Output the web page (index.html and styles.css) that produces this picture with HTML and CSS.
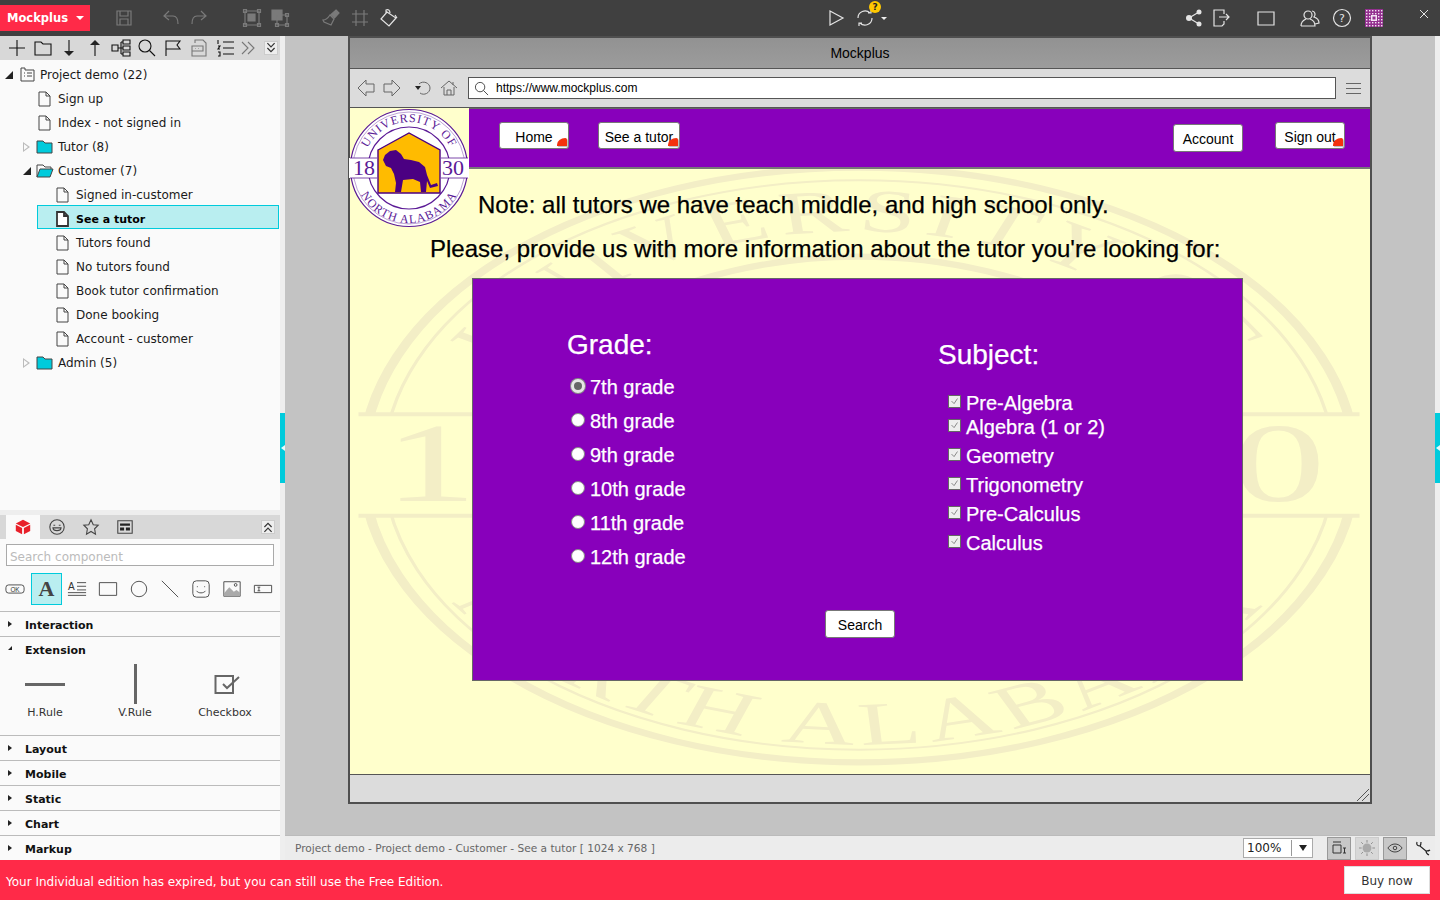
FILE: index.html
```html
<!DOCTYPE html>
<html lang="en">
<head>
  <meta charset="UTF-8">
  <title>Mockplus</title>
  <link rel="stylesheet" href="styles.css">
</head>
<body>
  <svg class="defs" width="0" height="0" aria-hidden="true">
    <defs>
      <path id="arc-top" d="M14 60 A46 46 0 0 1 106 60"/>
      <path id="arc-bottom" d="M5 60 A55 55 0 0 0 115 60"/>
      <symbol id="seal" viewBox="0 0 120 120" preserveAspectRatio="none">
        <circle class="seal-disc" cx="60" cy="60" r="58.5"/>
        <circle class="seal-line seal-thick" cx="60" cy="60" r="58.5"/>
        <circle class="seal-line seal-thin" cx="60" cy="60" r="56"/>
        <circle class="seal-line seal-thick" cx="60" cy="60" r="41"/>
        <path class="seal-disc seal-band" d="M0 50H28V70H0ZM92 50H120V70H92Z"/>
        <path class="seal-line" d="M1 50H28M1 70H28M92 50H119M92 70H119"/>
        <path class="seal-gold" d="M29 42L60 25L91 42V85H29Z"/>
        <path class="seal-ink" d="M34 52L36 47L41 43L47 42L52 46L55 51L62 52L70 54L76 59L78 67L82 77L88 75L89 78L81 80L78 73L77 84L72 84L71 74L64 71L54 72L52 84L46 84L47 75L45 66L42 60L37 58Z"/>
        <text class="seal-text seal-year" x="15" y="67">18</text>
        <text class="seal-text seal-year" x="104" y="67">30</text>
        <text class="seal-text seal-arc"><textPath href="#arc-top" startOffset="50%">UNIVERSITY OF</textPath></text>
        <text class="seal-text seal-arc"><textPath href="#arc-bottom" startOffset="50%">NORTH ALABAMA</textPath></text>
      </symbol>
    </defs>
  </svg>

  <header class="topbar">
    <div class="brand">Mockplus <span class="brand-caret"></span></div>
    <div class="tb-group tb-save dim">
      <svg class="ico" viewBox="0 0 20 20"><path d="M3 3H17V17H3ZM6 3V8H14V3M6 17V11H14V17"/></svg>
    </div>
    <div class="tb-group tb-history dim">
      <svg class="ico" viewBox="0 0 20 20"><path d="M8 3L3 8L8 12M3 8H12C15 8 17 11 17 16"/></svg>
      <svg class="ico" viewBox="0 0 20 20"><path d="M12 3L17 8L12 12M17 8H8C5 8 3 11 3 16"/></svg>
    </div>
    <div class="tb-group tb-arrange dim">
      <svg class="ico" viewBox="0 0 20 20"><path d="M3 3H17V17H3ZM1.500 1.500H4.500V4.500H1.500ZM15.500 1.500H18.500V4.500H15.500ZM1.500 15.500H4.500V18.500H1.500ZM15.500 15.500H18.500V18.500H15.500Z"/><path class="solid" d="M6 6H13V13H6Z"/></svg>
      <svg class="ico" viewBox="0 0 20 20"><path class="solid" d="M2 2H12V12H2Z"/><path d="M7 7H17V17H7ZM15.500 15.500H18.500V18.500H15.500ZM15.500 5.500H18.500V8.500H15.500ZM5.500 15.500H8.500V18.500H5.500Z"/></svg>
    </div>
    <div class="tb-group tb-tools">
      <svg class="ico dim" viewBox="0 0 20 20"><path class="solid" d="M15 2L18 5L13.500 10L10 6.500Z"/><path d="M9 7L13 11L10 17L3 14L2 12C5 12 7 10 9 7Z"/></svg>
      <svg class="ico dim" viewBox="0 0 20 20"><path d="M6 2V18M14 2V18M2 6H18M2 14H18"/></svg>
      <svg class="ico light" viewBox="0 0 20 20"><path d="M8 4L17 10L10 18L2 11ZM7 5V2C9 1 11 2 11 5M16 7L18 10"/></svg>
    </div>
    <div class="tb-group tb-run light">
      <svg class="ico" viewBox="0 0 20 20"><path d="M4 3L17 10L4 17Z"/></svg>
      <div class="sync">
        <svg class="ico" viewBox="0 0 20 20"><path d="M3 10A7 7 0 0 1 15 5M17 10A7 7 0 0 1 5 15M13 5H16V2M7 15H4V18"/></svg>
        <span class="sync-badge">?</span>
      </div>
      <span class="small-caret"></span>
    </div>
    <div class="tb-group tb-share light">
      <svg class="ico" viewBox="0 0 20 20"><path d="M15 4L5 10L15 16"/><circle class="solid-light" cx="15" cy="4" r="2.500"/><circle class="solid-light" cx="5" cy="10" r="3"/><circle class="solid-light" cx="15" cy="16" r="2.500"/></svg>
      <svg class="ico" viewBox="0 0 20 20"><path d="M13 6V2H3V18H11L13 16V13M8 9H18M15 6L18 9L15 12"/></svg>
    </div>
    <div class="tb-group tb-window light">
      <svg class="ico" viewBox="0 0 20 20"><path d="M2 4H18V17H2Z"/></svg>
    </div>
    <div class="tb-group tb-user light">
      <svg class="ico" viewBox="0 0 20 20"><circle cx="8" cy="7" r="4"/><path d="M1 18C1 13 4 12 6 11M10 11C13 12 15 14 15 18H1M12 3C15 3 16 7 14 9C17 10 19 12 19 15L15 16"/></svg>
      <svg class="ico" viewBox="0 0 20 20"><circle cx="10" cy="10" r="8.500"/><text class="help-mark" x="10" y="14">?</text></svg>
      <svg class="qr" viewBox="0 0 18 18">
        <defs>
          <pattern id="qr-cell" width="3" height="3" patternUnits="userSpaceOnUse"><rect width="3" height="3" fill="#93308f"/><rect x="1" y="1" width="1.400" height="1.400" fill="#f3e3f3"/></pattern>
        </defs>
        <rect width="18" height="18" fill="url(#qr-cell)"/>
        <rect x="6" y="6" width="6" height="6" fill="#f3e3f3"/>
        <rect x="7.500" y="7.500" width="3" height="3" fill="#93308f"/>
      </svg>
    </div>
    <svg class="tb-close light" viewBox="0 0 10 10"><path d="M1 1L9 9M9 1L1 9"/></svg>
  </header>

  <div class="workspace">
    <aside class="sidebar">
      <div class="tree-panel">
        <div class="side-tools">
          <svg class="ico" viewBox="0 0 20 20"><path d="M10 2V18M2 10H18"/></svg>
          <svg class="ico" viewBox="0 0 20 20"><path d="M2 17V4H8L10 6H18V17Z"/></svg>
          <svg class="ico" viewBox="0 0 20 20"><path d="M10 2V17"/><path class="fill-dark" d="M5 13H15L10 18Z"/></svg>
          <svg class="ico" viewBox="0 0 20 20"><path d="M10 18V4"/><path class="fill-dark" d="M5 7H15L10 2Z"/></svg>
          <svg class="ico" viewBox="0 0 20 20"><path d="M1 7H7V13H1ZM7 10H10M10 4V16M10 4H12M10 16H12M12 2H19V6H12ZM12 8H19V12H12ZM12 14H19V18H12ZM10 10H12"/></svg>
          <svg class="ico" viewBox="0 0 20 20"><circle cx="8" cy="8" r="6"/><path d="M12.500 12.500L18 18"/></svg>
          <svg class="ico" viewBox="0 0 20 20"><path d="M3 18V3H17L14 7L17 11H3"/></svg>
          <svg class="ico grey" viewBox="0 0 20 20"><path d="M6 5V2H14L17 5V18H3V8H14V13H3M6 10.500H6.500M9 10.500H9.500"/></svg>
          <svg class="ico" viewBox="0 0 20 20"><path d="M8 4H19M8 10H19M8 16H19M3 2V6M3 8H5L3 11H5M3 14H5V18H3"/></svg>
          <svg class="ico grey more" viewBox="0 0 20 20"><path d="M4 4L10 10L4 16M10 4L16 10L10 16"/></svg>
          <span class="collapse-box">
            <svg viewBox="0 0 10 10"><path d="M2 1L5 4L8 1M2 5L5 8L8 5"/></svg>
          </span>
        </div>
        <ul class="tree">
          <li class="tree-row lv0">
            <span class="twist open"></span>
            <svg class="tree-ico" viewBox="0 0 18 16"><path d="M3 1H7V3H16V14H3ZM6 6H7M9 6H14M6 9H7M9 9H14"/></svg>
            <span>Project demo (22)</span>
          </li>
          <li class="tree-row lv1"><span class="twist none"></span><svg class="tree-ico" viewBox="0 0 18 16"><path d="M3 1H10L14 5V15H3ZM10 1V5H14"/></svg><span>Sign up</span></li>
          <li class="tree-row lv1"><span class="twist none"></span><svg class="tree-ico" viewBox="0 0 18 16"><path d="M3 1H10L14 5V15H3ZM10 1V5H14"/></svg><span>Index - not signed in</span></li>
          <li class="tree-row lv1"><span class="twist closed"></span><svg class="tree-ico" viewBox="0 0 18 16"><path class="folder" d="M1 14V2H7L9 4H16V14Z"/></svg><span>Tutor (8)</span></li>
          <li class="tree-row lv1"><span class="twist open"></span><svg class="tree-ico" viewBox="0 0 18 16"><path d="M1 14V2H7L9 4H15V6"/><path class="folder" d="M4 6H17L14 14H1Z"/></svg><span>Customer (7)</span></li>
          <li class="tree-row lv2"><span class="twist none"></span><svg class="tree-ico" viewBox="0 0 18 16"><path d="M3 1H10L14 5V15H3ZM10 1V5H14"/></svg><span>Signed in-customer</span></li>
          <li class="tree-row lv2 selected"><span class="twist none"></span><svg class="tree-ico thick" viewBox="0 0 18 16"><path d="M3 1H10L14 5V15H3ZM10 1V5H14"/></svg><span>See a tutor</span></li>
          <li class="tree-row lv2"><span class="twist none"></span><svg class="tree-ico" viewBox="0 0 18 16"><path d="M3 1H10L14 5V15H3ZM10 1V5H14"/></svg><span>Tutors found</span></li>
          <li class="tree-row lv2"><span class="twist none"></span><svg class="tree-ico" viewBox="0 0 18 16"><path d="M3 1H10L14 5V15H3ZM10 1V5H14"/></svg><span>No tutors found</span></li>
          <li class="tree-row lv2"><span class="twist none"></span><svg class="tree-ico" viewBox="0 0 18 16"><path d="M3 1H10L14 5V15H3ZM10 1V5H14"/></svg><span>Book tutor confirmation</span></li>
          <li class="tree-row lv2"><span class="twist none"></span><svg class="tree-ico" viewBox="0 0 18 16"><path d="M3 1H10L14 5V15H3ZM10 1V5H14"/></svg><span>Done booking</span></li>
          <li class="tree-row lv2"><span class="twist none"></span><svg class="tree-ico" viewBox="0 0 18 16"><path d="M3 1H10L14 5V15H3ZM10 1V5H14"/></svg><span>Account - customer</span></li>
          <li class="tree-row lv1"><span class="twist closed"></span><svg class="tree-ico" viewBox="0 0 18 16"><path class="folder" d="M1 14V2H7L9 4H16V14Z"/></svg><span>Admin (5)</span></li>
        </ul>
      </div>

      <div class="comp-panel">
        <div class="comp-tabs">
          <span class="comp-tab active">
            <svg viewBox="0 0 20 20"><path class="cube-top" d="M10 2L18 6L10 10L2 6Z"/><path class="cube-side" d="M2 7.500L9 11V18L2 14.500ZM18 7.500L11 11V18L18 14.500Z"/></svg>
          </span>
          <span class="comp-tab">
            <svg viewBox="0 0 20 20"><circle cx="10" cy="10" r="8"/><path d="M6 8H8M12 8H14M5.500 11H14.500C14 15 6 15 5.500 11Z"/></svg>
          </span>
          <span class="comp-tab">
            <svg viewBox="0 0 20 20"><path d="M10 2L12.500 7.500L18 8L14 12L15 18L10 15L5 18L6 12L2 8L7.500 7.500Z"/></svg>
          </span>
          <span class="comp-tab">
            <svg viewBox="0 0 20 20"><path d="M2 3H18V17H2Z"/><path class="fill-dark" d="M4.500 6H15.500V8.500H4.500ZM4.500 10.500H9V14H4.500ZM11 10.500H15.500V14H11Z"/></svg>
          </span>
          <span class="collapse-box">
            <svg viewBox="0 0 10 10"><path d="M2 5L5 2L8 5M2 9L5 6L8 9"/></svg>
          </span>
        </div>
        <div class="comp-search">Search component</div>
        <div class="comp-icons">
          <span class="comp-cell"><svg viewBox="0 0 22 12"><rect x="1" y="1.500" width="20" height="9" rx="3"/><text class="ok-mark" x="11" y="9">OK</text></svg></span>
          <span class="comp-cell active"><span class="big-a">A</span></span>
          <span class="comp-cell"><svg viewBox="0 0 22 20"><text class="a-mark" x="1" y="11">A</text><path d="M11 3H21M11 7H21M11 11H21M1 14H21M1 17H21"/></svg></span>
          <span class="comp-cell"><svg viewBox="0 0 22 20"><path d="M1.500 3H20.500V17H1.500Z"/></svg></span>
          <span class="comp-cell"><svg viewBox="0 0 22 20"><circle cx="11" cy="10" r="8.500"/></svg></span>
          <span class="comp-cell"><svg viewBox="0 0 22 20"><path d="M2 1L20 19"/></svg></span>
          <span class="comp-cell"><svg viewBox="0 0 22 20"><rect x="2" y="1" width="18" height="18" rx="4"/><path d="M7 7V8M15 7V8M6 12C8 15 14 15 16 12"/></svg></span>
          <span class="comp-cell"><svg viewBox="0 0 22 20"><path d="M2 2H20V18H2Z"/><path class="fill-grey" d="M2 15L8 8L13 13L16 11L20 14V18H2Z"/><circle cx="15" cy="5.500" r="1.500"/></svg></span>
          <span class="comp-cell"><svg viewBox="0 0 22 20"><path d="M1.500 6H20.500V14H1.500ZM5 8H8M5 12H8M6.500 8V12"/></svg></span>
        </div>

        <div class="sec"><span class="sec-arrow"></span>Interaction</div>
        <div class="sec"><span class="sec-arrow down"></span>Extension</div>
        <div class="ext-body">
          <div class="ext-item"><span class="ext-ico"><span class="h-rule"></span></span>H.Rule</div>
          <div class="ext-item"><span class="ext-ico"><span class="v-rule"></span></span>V.Rule</div>
          <div class="ext-item"><span class="ext-ico"><svg class="ext-check" viewBox="0 0 26 20"><path d="M1.500 2H19V19H1.500Z"/><path d="M9 10L13 14L25 3"/></svg></span>Checkbox</div>
        </div>
        <div class="sec"><span class="sec-arrow"></span>Layout</div>
        <div class="sec"><span class="sec-arrow"></span>Mobile</div>
        <div class="sec"><span class="sec-arrow"></span>Static</div>
        <div class="sec"><span class="sec-arrow"></span>Chart</div>
        <div class="sec"><span class="sec-arrow"></span>Markup</div>
      </div>
    </aside>
    <span class="handle handle-left"></span>

    <main class="center">
      <div class="canvas">
        <div class="device">
          <div class="dev-title">Mockplus</div>
          <div class="dev-address">
            <svg class="dev-ico" viewBox="0 0 18 18"><path d="M9 1L1 9L9 17V13H17V5H9Z"/></svg>
            <svg class="dev-ico" viewBox="0 0 18 18"><path d="M9 1L17 9L9 17V13H1V5H9Z"/></svg>
            <svg class="dev-ico reload" viewBox="0 0 18 18"><path d="M5 5C9 1 16 4 16 9C16 14 10 17 6 14"/><path class="fill-dark" d="M1 7H7L4 11Z"/></svg>
            <svg class="dev-ico" viewBox="0 0 18 18"><path d="M1 9L9 2L17 9M4 8V16H14V8M7 16V11H11V16M13 3V6"/></svg>
            <div class="url-box">
              <svg class="url-ico" viewBox="0 0 16 16"><circle cx="6.500" cy="6.500" r="5"/><path d="M10 10L15 15"/></svg>
              https://www.mockplus.com
            </div>
            <span class="burger"></span>
          </div>

          <div class="dev-content">
            <svg class="watermark"><use href="#seal"/></svg>
            <div class="head">
              <svg class="logo"><use href="#seal"/></svg>
              <div class="head-main">
                <nav class="site-nav">
                  <a class="nav-btn linked btn-home">Home</a>
                  <a class="nav-btn linked btn-tutor">See a tutor</a>
                  <a class="nav-btn btn-account">Account</a>
                  <a class="nav-btn linked btn-out">Sign out</a>
                </nav>
                <p class="note">Note: all tutors we have teach middle, and high school only.</p>
              </div>
            </div>
            <p class="please">Please, provide us with more information about the tutor you're looking for:</p>

            <form class="search-panel">
              <div class="panel-cols">
                <div class="col-grade">
                  <h2 class="col-title">Grade:</h2>
                  <ul class="radio-list">
                    <li><span class="radio on"></span>7th grade</li>
                    <li><span class="radio"></span>8th grade</li>
                    <li><span class="radio"></span>9th grade</li>
                    <li><span class="radio"></span>10th grade</li>
                    <li><span class="radio"></span>11th grade</li>
                    <li><span class="radio"></span>12th grade</li>
                  </ul>
                </div>
                <div class="col-subject">
                  <h2 class="col-title">Subject:</h2>
                  <ul class="check-list">
                    <li class="tight"><svg class="check" viewBox="0 0 13 13"><path d="M3 6L6 9L10 3"/></svg>Pre-Algebra</li>
                    <li><svg class="check" viewBox="0 0 13 13"><path d="M3 6L6 9L10 3"/></svg>Algebra (1 or 2)</li>
                    <li><svg class="check" viewBox="0 0 13 13"><path d="M3 6L6 9L10 3"/></svg>Geometry</li>
                    <li><svg class="check" viewBox="0 0 13 13"><path d="M3 6L6 9L10 3"/></svg>Trigonometry</li>
                    <li><svg class="check" viewBox="0 0 13 13"><path d="M3 6L6 9L10 3"/></svg>Pre-Calculus</li>
                    <li><svg class="check" viewBox="0 0 13 13"><path d="M3 6L6 9L10 3"/></svg>Calculus</li>
                  </ul>
                </div>
              </div>
              <a class="nav-btn btn-search">Search</a>
            </form>
          </div>

          <div class="dev-footer">
            <svg class="grip" viewBox="0 0 12 12"><path d="M0 12L12 0M5 12L12 5"/></svg>
          </div>
        </div>
      </div>

      <div class="status">
        <span class="status-path">Project demo - Project demo - Customer - See a tutor [ 1024 x 768 ]</span>
        <div class="zoom-box"><span class="zoom-val">100%</span><span class="zoom-arrow"></span></div>
        <span class="st-btn on"><svg viewBox="0 0 16 16"><path d="M2 2H10M2 5H10V13H2ZM12 8H15M12 13H15M13.500 8V13"/></svg></span>
        <span class="st-btn faded"><svg viewBox="0 0 18 18"><circle class="fill-grey" cx="9" cy="9" r="5"/><path d="M9 0V3M9 15V18M0 9H3M15 9H18M2.500 2.500L4.500 4.500M13.500 13.500L15.500 15.500M2.500 15.500L4.500 13.500M13.500 4.500L15.500 2.500"/></svg></span>
        <span class="st-btn on"><svg viewBox="0 0 18 18"><path d="M1 9C5 3 13 3 17 9C13 15 5 15 1 9Z"/><circle cx="9" cy="9" r="2"/></svg></span>
        <span class="st-wrench"><svg viewBox="0 0 16 16"><path d="M2 2C1 5 3 6 5 6L11 11C11 13 12 14 14 15M6 2C6 3 6 5 5 6M11 11C12 11 14 11 15 10"/></svg></span>
      </div>
    </main>

    <div class="right-strip"></div>
    <span class="handle handle-right"></span>
  </div>

  <footer class="expired">
    <span>Your Individual edition has expired, but you can still use the Free Edition.</span>
    <a class="buy">Buy now</a>
  </footer>
</body>
</html>
```

FILE: styles.css
```css
* {
  box-sizing: border-box;
}

html, body {
  height: 100%;
}

body {
  margin: 0;
  width: 1440px;
  height: 900px;
  overflow: hidden;
  display: flex;
  flex-direction: column;
  background: #c3c3c3;
  font-family: "DejaVu Sans", sans-serif;
  font-size: 12px;
  color: #111;
}

ul {
  list-style: none;
  margin: 0;
  padding: 0;
}

svg {
  display: block;
  fill: none;
}

.defs {
  position: absolute;
}

/* top bar */
.topbar {
  height: 36px;
  flex: none;
  display: flex;
  align-items: center;
  background: #404040;
}

.brand {
  width: 90px;
  height: 26px;
  display: flex;
  align-items: center;
  gap: 8px;
  padding-left: 7px;
  background: #ff2a48;
  color: #fff;
  font-weight: bold;
  font-size: 11.5px;
  white-space: nowrap;
}

.brand-caret {
  width: 0;
  height: 0;
  border-left: 4px solid transparent;
  border-right: 4px solid transparent;
  border-top: 4px solid #fff;
}

.tb-group {
  display: flex;
  align-items: center;
  gap: 8px;
}

.ico {
  width: 20px;
  height: 20px;
  flex: none;
  stroke: currentColor;
  stroke-width: 1.2;
}

.dim { color: #7a7a7a; }
.light { color: #e4e4e4; }
.grey { color: #777; }

.solid { fill: currentColor; }
.solid-light { fill: currentColor; stroke: none; }

.tb-save { margin-left: 24px; }
.tb-history { margin-left: 27px; }
.tb-arrange { margin-left: 33px; }
.tb-tools { margin-left: 31px; gap: 9px; }
.tb-run { margin-left: 427px; gap: 9px; }
.tb-share { margin-left: 297px; gap: 7px; }
.tb-window { margin-left: 25px; }
.tb-user { margin-left: 24px; gap: 12px; }
.tb-user .qr { margin-left: 1px; }
.tb-close {
  width: 10px;
  height: 10px;
  margin: -8px 0 0 36px;
  stroke: currentColor;
  stroke-width: 1;
}

.sync {
  position: relative;
}

.sync-badge {
  position: absolute;
  top: -7px;
  right: -6px;
  width: 12px;
  height: 12px;
  border-radius: 50%;
  background: #ffc800;
  color: #222;
  font-size: 9px;
  line-height: 12px;
  font-weight: bold;
  text-align: center;
}

.small-caret {
  width: 0;
  height: 0;
  margin-left: -3px;
  border-left: 3px solid transparent;
  border-right: 3px solid transparent;
  border-top: 3px solid #eee;
}

.help-mark {
  fill: currentColor;
  stroke: none;
  font-size: 11px;
  text-anchor: middle;
}

.qr {
  width: 18px;
  height: 18px;
}

/* layout */
.workspace {
  flex: 1;
  display: flex;
  position: relative;
  min-height: 0;
}

.sidebar {
  width: 285px;
  flex: none;
  padding-right: 5px;
  background: #eee;
}

.tree-panel {
  height: 474px;
  background: #fafafa;
}

.side-tools {
  height: 24px;
  display: flex;
  align-items: center;
  gap: 6px;
  padding-left: 7px;
  background: #d8d8d8;
  color: #111;
}

.side-tools .ico {
  stroke-width: 1.1;
}

.side-tools .more {
  margin-left: -3px;
}

.fill-dark {
  fill: #222;
  stroke: none;
}

.fill-grey {
  fill: #aaa;
  stroke: none;
}

.collapse-box {
  width: 14px;
  height: 14px;
  flex: none;
  margin-left: auto;
  margin-right: 5px;
  background: #eee;
  border: 1px solid #ccc;
}

.collapse-box svg {
  width: 12px;
  height: 12px;
  stroke: #333;
}

/* tree */
.tree {
  padding-top: 2px;
}

.tree-row {
  height: 24px;
  display: flex;
  align-items: center;
  padding-top: 2px;
  white-space: nowrap;
  color: #1a1a1a;
}

.lv0 { padding-left: 4px; }
.lv1 { padding-left: 22px; }
.lv2 { padding-left: 40px; }

.tree-row .tree-ico + span {
  margin-left: 4px;
}

.tree-row.selected {
  margin: -1px 1px 1px 37px;
  padding-left: 2px;
  padding-top: 4px;
  background: #b9eef0;
  border: 1px solid #00cbdc;
  font-size: 11px;
  font-weight: bold;
  color: #000;
}

.twist {
  width: 14px;
  height: 10px;
  flex: none;
  position: relative;
}

.twist.open::before {
  content: "";
  position: absolute;
  left: 1px;
  top: 1px;
  border-left: 8px solid transparent;
  border-bottom: 8px solid #222;
}

.twist.closed::before {
  content: "";
  position: absolute;
  left: 1px;
  top: 0;
  border-left: 7px solid #bbb;
  border-top: 5px solid transparent;
  border-bottom: 5px solid transparent;
}

.twist.closed::after {
  content: "";
  position: absolute;
  left: 2px;
  top: 2px;
  border-left: 4px solid #fafafa;
  border-top: 3px solid transparent;
  border-bottom: 3px solid transparent;
}

.tree-ico {
  width: 18px;
  height: 16px;
  flex: none;
  stroke: #444;
  stroke-width: 1;
}

.tree-ico.thick {
  stroke: #333;
  stroke-width: 1.8;
  fill: #fff;
}

.folder {
  fill: #00cbdc;
  stroke: #444;
}

/* components */
.comp-panel {
  height: 345px;
  margin-top: 5px;
  background: #fafafa;
  overflow: hidden;
}

.comp-tabs {
  height: 24px;
  display: flex;
  align-items: center;
  padding-left: 6px;
  background: #d8d8d8;
}

.comp-tab {
  width: 34px;
  height: 24px;
  display: flex;
  align-items: center;
  justify-content: center;
}

.comp-tab.active {
  background: #fafafa;
}

.comp-tab svg {
  width: 18px;
  height: 18px;
  stroke: #444;
  stroke-width: 1.2;
}

.cube-top, .cube-side {
  fill: #e8202a;
  stroke: none;
}

.comp-search {
  height: 22px;
  margin: 5px 6px 0;
  padding: 2px 0 0 3px;
  background: #fff;
  border: 1px solid #aaa;
  color: #bbb;
  font-size: 12px;
  line-height: 20px;
}

.comp-icons {
  display: flex;
  margin-top: 7px;
  margin-bottom: 6px;
}

.comp-cell {
  width: 31px;
  height: 32px;
  flex: none;
  display: flex;
  align-items: center;
  justify-content: center;
}

.comp-cell svg {
  width: 20px;
  height: 20px;
  margin-left: -2px;
  stroke: #444;
  stroke-width: 1;
}

.comp-cell.active {
  background: #b9eef0;
  border: 1px solid #00cbdc;
}

.big-a {
  font-family: "Liberation Serif", serif;
  font-size: 22px;
  font-weight: bold;
  color: #444;
}

.ok-mark, .a-mark {
  fill: #333;
  stroke: none;
  font-family: "Liberation Sans", sans-serif;
  font-size: 7px;
  text-anchor: middle;
}

.a-mark {
  font-size: 11px;
  text-anchor: start;
}

.sec {
  height: 25px;
  display: flex;
  align-items: center;
  padding: 2px 0 0 8px;
  border-top: 1px solid #bbb;
  font-size: 11px;
  font-weight: bold;
  color: #111;
}

.sec-arrow {
  width: 17px;
  height: 6px;
  flex: none;
  position: relative;
  top: -1px;
}

.sec-arrow::before {
  content: "";
  position: absolute;
  left: 0;
  top: 0;
  border-left: 4px solid #222;
  border-top: 3px solid transparent;
  border-bottom: 3px solid transparent;
}

.sec-arrow.down::before {
  border-left: 4px solid transparent;
  border-top: 0;
  border-bottom: 4px solid #222;
}

.ext-body {
  height: 74px;
  display: flex;
}

.ext-item {
  width: 90px;
  display: flex;
  flex-direction: column;
  align-items: center;
  font-size: 11px;
  color: #333;
}

.ext-ico {
  height: 44px;
  margin-top: 1px;
  display: flex;
  align-items: center;
  justify-content: center;
}

.h-rule {
  width: 40px;
  height: 3px;
  background: #666;
}

.v-rule {
  width: 3px;
  height: 40px;
  background: #666;
}

.ext-check {
  width: 26px;
  height: 20px;
  margin-left: 4px;
  stroke: #666;
  stroke-width: 2;
}

.handle {
  position: absolute;
  top: 377px;
  width: 5px;
  height: 70px;
  background: #00cbdc;
}

.handle::after {
  content: "";
  position: absolute;
  left: 1px;
  top: 32px;
  border-right: 4px solid #e8fbfc;
  border-top: 3px solid transparent;
  border-bottom: 3px solid transparent;
}

.handle-left { left: 280px; }
.handle-right { right: 0; }

/* canvas */
.center {
  flex: 1;
  display: flex;
  flex-direction: column;
  min-width: 0;
}

.canvas {
  flex: 1;
  padding-left: 63px;
  background: #c3c3c3;
}

.right-strip {
  width: 5px;
  flex: none;
  background: #eee;
}

.status {
  height: 25px;
  flex: none;
  display: flex;
  align-items: center;
  padding-left: 10px;
  background: #ececec;
  border-top: 1px solid #bbb;
}

.status-path {
  width: 948px;
  flex: none;
  font-size: 10.6px;
  color: #666;
  white-space: nowrap;
}

.zoom-box {
  width: 70px;
  height: 20px;
  display: flex;
  align-items: center;
  padding-left: 3px;
  background: #fff;
  border: 1px solid #aaa;
  font-size: 12px;
  color: #222;
}

.zoom-val {
  width: 45px;
  height: 16px;
  line-height: 16px;
  border-right: 1px solid #999;
}

.zoom-arrow {
  margin-left: 7px;
  border-left: 4px solid transparent;
  border-right: 4px solid transparent;
  border-top: 6px solid #222;
}

.st-btn {
  width: 24px;
  height: 23px;
  margin-left: 4px;
  flex: none;
  display: flex;
  align-items: center;
  justify-content: center;
  background: #c8c8c8;
  border: 1px solid #999;
}

.zoom-box + .st-btn {
  margin-left: 14px;
}

.st-btn svg {
  width: 16px;
  height: 16px;
  stroke: #333;
  stroke-width: 1;
}

.st-btn.faded {
  background: #d8d8d8;
  border-color: #ccc;
}

.st-btn.faded svg {
  stroke: #888;
}

.st-wrench {
  margin-left: 8px;
}

.st-wrench svg {
  width: 16px;
  height: 16px;
  stroke: #222;
  stroke-width: 1.2;
}

/* device mock */
.device {
  width: 1024px;
  height: 768px;
  display: flex;
  flex-direction: column;
  border: 2px solid #4f4f4f;
  font-family: "Liberation Sans", sans-serif;
  color: #000;
}

.dev-title {
  height: 31px;
  flex: none;
  border-bottom: 1px solid #555;
  background: linear-gradient(#929292, #9c9c9c);
  font-size: 14px;
  line-height: 30px;
  text-align: center;
}

.dev-address {
  height: 39px;
  flex: none;
  display: flex;
  align-items: center;
  gap: 8px;
  padding-left: 7px;
  border-bottom: 1px solid #555;
  background: #dcdcdc;
}

.dev-ico {
  width: 18px;
  height: 18px;
  flex: none;
  stroke: #666;
  stroke-width: 1;
}

.dev-ico.reload {
  margin-left: 5px;
}

.url-box {
  width: 868px;
  height: 22px;
  margin-left: 2px;
  display: flex;
  align-items: center;
  gap: 7px;
  padding-left: 5px;
  background: #fff;
  border: 1px solid #555;
  font-size: 12px;
}

.url-ico {
  width: 15px;
  height: 15px;
  stroke: #444;
  stroke-width: 1;
}

.burger {
  width: 15px;
  height: 11px;
  margin-left: 2px;
  border-top: 1px solid #666;
  border-bottom: 1px solid #666;
  position: relative;
}

.burger::before {
  content: "";
  position: absolute;
  left: 0;
  right: 0;
  top: 4px;
  height: 1px;
  background: #666;
}

.dev-content {
  height: 667px;
  flex: none;
  position: relative;
  border-bottom: 1px solid #555;
  background: #ffc;
  -webkit-text-stroke: .25px;
}

.dev-footer {
  flex: 1;
  position: relative;
  background: #dcdcdc;
}

.grip {
  position: absolute;
  right: 1px;
  bottom: 1px;
  width: 12px;
  height: 12px;
  stroke: #555;
  stroke-width: 1;
}

/* seal, shared by logo and watermark */
.logo {
  --disc: #fff;
  --line: #5b1a96;
  --gold: #ffbb00;
  --ink: #4b0082;
}

.watermark {
  position: absolute;
  left: 0;
  top: 52px;
  width: 1018px;
  height: 610px;
  --disc: #ffc;
  --line: #f3eec6;
  --gold: #ffc;
  --ink: #f3eec6;
}

.seal-disc {
  fill: var(--disc);
}

.seal-line {
  stroke: var(--line);
  stroke-width: .8;
  fill: none;
}

.seal-thick {
  stroke-width: 1.2;
}

.seal-thin {
  stroke-width: .4;
}

.seal-gold {
  fill: var(--gold);
  stroke: var(--ink);
  stroke-width: 1.4;
}

.seal-ink {
  fill: var(--ink);
}

.seal-text {
  fill: var(--line);
  font-family: "Liberation Serif", serif;
  text-anchor: middle;
  -webkit-text-stroke: 0;
}

.seal-year {
  font-size: 22px;
}

.seal-arc {
  font-size: 12px;
  letter-spacing: 1px;
}

.head {
  display: flex;
  position: relative;
}

.logo {
  width: 120px;
  height: 120px;
  margin-left: -1px;
  flex: none;
}

.head-main {
  flex: 1;
  min-width: 0;
}

.site-nav {
  height: 61px;
  display: flex;
  align-items: flex-start;
  padding: 13px 25px 0 30px;
  background: #8800bb;
  border-top: 1px solid #666;
  border-bottom: 2px solid #777;
}

.nav-btn {
  height: 27px;
  flex: none;
  position: relative;
  display: flex;
  align-items: center;
  justify-content: center;
  padding-top: 1px;
  background: #fff;
  border: 1px solid #777;
  border-radius: 3px;
  font-size: 14px;
  color: #000;
  -webkit-text-stroke: 0;
}

.nav-btn.linked {
  padding-top: 3px;
}

.linked::after {
  content: "";
  position: absolute;
  right: 1px;
  bottom: 2px;
  width: 10px;
  height: 8px;
  background: #f4320e;
  border-radius: 100% 2px 0 0;
  box-shadow: 1px 1px 1px #bbb;
}

.btn-home { width: 70px; }
.btn-tutor { width: 82px; margin-left: 29px; }
.btn-account { width: 70px; height: 28px; margin-top: 2px; margin-left: auto; }
.btn-out { width: 70px; margin-left: 32px; }

.note {
  margin: 22px 0 0 9px;
  font-size: 24px;
  line-height: 28px;
  white-space: nowrap;
}

.please {
  position: relative;
  margin: 7px 0 0 80px;
  font-size: 24px;
  line-height: 28px;
  white-space: nowrap;
}

.search-panel {
  position: relative;
  width: 771px;
  height: 403px;
  margin: 15px 0 0 122px;
  padding-top: 50px;
  background: #8800bb;
  border: 1px solid #666;
  color: #fff;
}

.panel-cols {
  display: flex;
  height: 245px;
}

.col-grade {
  width: 371px;
  margin-left: 94px;
}

.col-subject {
  padding-top: 10px;
}

.col-title {
  margin: 0;
  font-size: 28px;
  font-weight: normal;
  line-height: 32px;
}

.radio-list {
  margin-top: 9px;
  font-size: 20px;
}

.radio-list li {
  height: 34px;
  display: flex;
  align-items: center;
  padding-left: 4px;
}

.radio {
  width: 14px;
  height: 14px;
  margin-right: 5px;
  margin-top: -2px;
  flex: none;
  background: #fff;
  border: 1px solid #888;
  border-radius: 50%;
}

.radio.on {
  border: 3px solid #e6e6e6;
  background: #666;
  box-shadow: 0 0 0 1px #888;
}

.check-list {
  margin-top: 18px;
  font-size: 20px;
}

.check-list li {
  height: 29px;
  display: flex;
  align-items: center;
  padding-left: 10px;
  white-space: nowrap;
}

.check-list li.tight {
  margin-bottom: -5px;
}

.check {
  width: 13px;
  height: 13px;
  margin-right: 5px;
  margin-top: -4px;
  flex: none;
  background: #eee;
  border: 1px solid #666;
  stroke: #777;
  stroke-width: 1;
}

.btn-search {
  width: 70px;
  height: 28px;
  margin: 36px 0 0 352px;
}

/* expired bar */
.expired {
  height: 40px;
  flex: none;
  display: flex;
  align-items: center;
  justify-content: space-between;
  padding: 0 10px 0 6px;
  background: #ff2a48;
  color: #fff;
  font-size: 12px;
}

.expired > span {
  padding-top: 3px;
}

.buy {
  width: 86px;
  height: 28px;
  display: flex;
  align-items: center;
  justify-content: center;
  padding-top: 1px;
  background: #fff;
  border: 1px solid #ddd;
  color: #333;
}
```
